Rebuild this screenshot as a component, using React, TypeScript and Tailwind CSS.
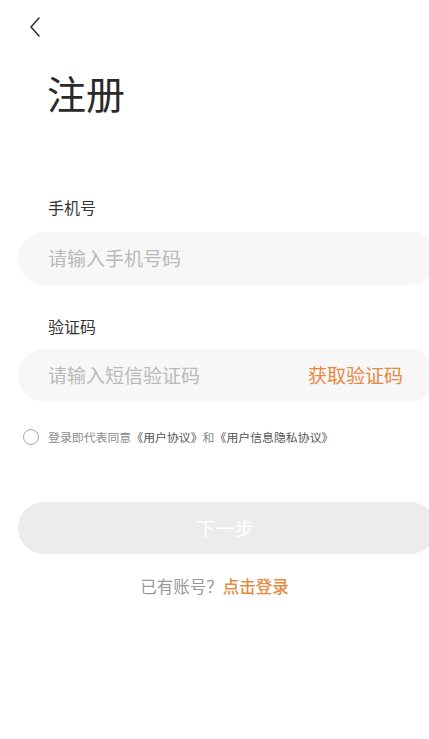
import React, { useState } from 'react';

const font = { fontFamily: '"Noto Sans CJK SC", "Noto Sans", sans-serif' };

const App: React.FC = () => {
  const [agreed, setAgreed] = useState(false);

  return (
    <div className="w-[429px] h-[739px] bg-white overflow-hidden" style={font}>
      {/* back */}
      <div className="h-[54px] pl-[27px] pt-[15px]">
        <svg width="16" height="24" viewBox="0 0 16 24" fill="none">
          <path d="M12 3 L4 12 L12 21" stroke="#333" strokeWidth="1.6" strokeLinecap="round" strokeLinejoin="round" />
        </svg>
      </div>

      <h1 className="pl-[47px] mt-[14px] text-[39px] leading-[48px] text-[#2a2a2a] font-normal">注册</h1>

      <div className="pl-[18px] mt-[81px]">
        <div className="pl-[30px] text-[16px] leading-[20px] text-[#333]">手机号</div>
        <div className="mt-[15px] w-[418px] h-[53px] rounded-full bg-[#f7f7f7] flex items-center pl-[30px]">
          <input
            className="bg-transparent outline-none text-[19px] text-[#333] placeholder:text-[#b9b9b9] w-[260px]"
            placeholder="请输入手机号码"
          />
        </div>

        <div className="pl-[30px] mt-[31px] text-[16px] leading-[20px] text-[#333]">验证码</div>
        <div className="mt-[13px] w-[418px] h-[53px] rounded-full bg-[#f7f7f7] flex items-center pl-[30px]">
          <input
            className="bg-transparent outline-none text-[19px] text-[#333] placeholder:text-[#b9b9b9] w-[250px]"
            placeholder="请输入短信验证码"
          />
          <button className="ml-[10px] text-[19px] text-[#e6893f] whitespace-nowrap">获取验证码</button>
        </div>
      </div>

      <div className="flex items-center pl-[23px] mt-[27px]">
        <button
          onClick={() => setAgreed(!agreed)}
          className={`w-[16px] h-[16px] rounded-full border-[1.5px] ${agreed ? 'border-[#e6893f] bg-[#e6893f]' : 'border-[#aaa]'}`}
        />
        <span className="ml-[9px] text-[11.9px] leading-[16px] text-[#8a8a8a] whitespace-nowrap">
          登录即代表同意<span className="text-[#555]">《用户协议》</span>和<span className="text-[#555]">《用户信息隐私协议》</span>
        </span>
      </div>

      <div className="pl-[18px] mt-[57px]">
        <button className="w-[418px] h-[52px] rounded-full bg-[#ececec] text-white text-[19px] flex items-center justify-center pr-[4px]">
          下一步
        </button>
      </div>

      <div className="mt-[21px] text-center text-[16.5px] leading-[22px] text-[#999]">
        已有账号？<span className="text-[#e6893f] font-medium">点击登录</span>
      </div>
    </div>
  );
};

export default App;
